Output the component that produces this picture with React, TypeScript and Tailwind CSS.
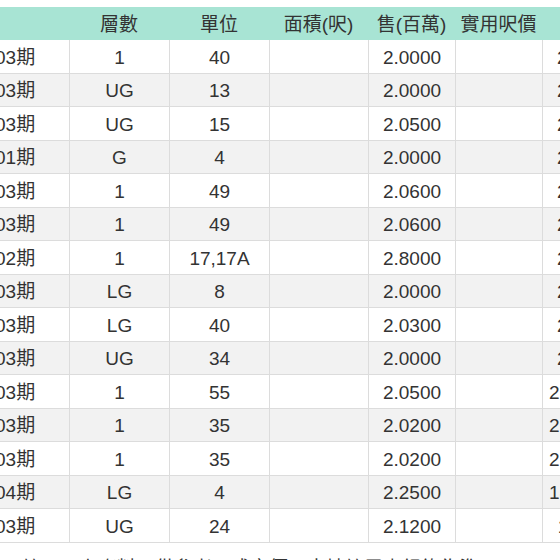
import React from "react";

type Row = {
  phase: string;
  floor: string;
  unit: string;
  price: string;
  psf: string;
};

const rows: Row[] = [
  { phase: "03期", floor: "1", unit: "40", price: "2.0000", psf: "21,500" },
  { phase: "03期", floor: "UG", unit: "13", price: "2.0000", psf: "21,500" },
  { phase: "03期", floor: "UG", unit: "15", price: "2.0500", psf: "21,500" },
  { phase: "01期", floor: "G", unit: "4", price: "2.0000", psf: "21,500" },
  { phase: "03期", floor: "1", unit: "49", price: "2.0600", psf: "21,500" },
  { phase: "03期", floor: "1", unit: "49", price: "2.0600", psf: "21,500" },
  { phase: "02期", floor: "1", unit: "17,17A", price: "2.8000", psf: "21,500" },
  { phase: "03期", floor: "LG", unit: "8", price: "2.0000", psf: "21,500" },
  { phase: "03期", floor: "LG", unit: "40", price: "2.0300", psf: "21,500" },
  { phase: "03期", floor: "UG", unit: "34", price: "2.0000", psf: "21,500" },
  { phase: "03期", floor: "1", unit: "55", price: "2.0500", psf: "21,579.5" },
  { phase: "03期", floor: "1", unit: "35", price: "2.0200", psf: "21,579.5" },
  { phase: "03期", floor: "1", unit: "35", price: "2.0200", psf: "21,579.5" },
  { phase: "04期", floor: "LG", unit: "4", price: "2.2500", psf: "18,000.0" },
  { phase: "03期", floor: "UG", unit: "24", price: "2.1200", psf: "11,500" },
];

const cols = "grid grid-cols-[69px_100px_100px_99px_87px_87px_87px]";
const cell = "flex items-center justify-center pt-[3px] border-l border-[#dcdcdc] overflow-hidden whitespace-nowrap";

export default function App() {
  return (
    <div
      className="w-[560px] h-[560px] overflow-hidden bg-white text-[19px] text-[#333]"
      style={{ fontFamily: '"Liberation Sans", Arial, "Noto Sans CJK TC", sans-serif' }}
    >
      <div className="h-[7px]" />
      {/* header */}
      <div className={`${cols} h-[33px] bg-[#a8e4d4] pt-[3px]`}>
        <div />
        <div className="flex items-center justify-center">層數</div>
        <div className="flex items-center justify-center">單位</div>
        <div className="flex items-center justify-center">面積(呎)</div>
        <div className="flex items-center justify-center">售(百萬)</div>
        <div className="flex items-center justify-center whitespace-nowrap">實用呎價</div>
        <div />
      </div>

      {/* body */}
      {rows.map((r, i) => (
        <div
          key={i}
          className={`${cols} h-[33.5px] border-b border-[#dcdcdc] ${i % 2 === 1 ? "bg-[#f2f2f2]" : "bg-white"}`}
        >
          <div className="flex items-center pt-[3px] overflow-hidden whitespace-nowrap">
            <span className="-ml-[5px]">{r.phase}</span>
          </div>
          <div className={cell}>{r.floor}</div>
          <div className={cell}>{r.unit}</div>
          <div className={cell}></div>
          <div className={cell}>{r.price}</div>
          <div className={cell}></div>
          <div className={cell}>{r.psf}</div>
        </div>
      ))}

      <p className="mt-[12px] pl-[22px] whitespace-nowrap">
        註：以上資料只供參考，成交價以土地註冊處紀錄為準
      </p>
    </div>
  );
}
